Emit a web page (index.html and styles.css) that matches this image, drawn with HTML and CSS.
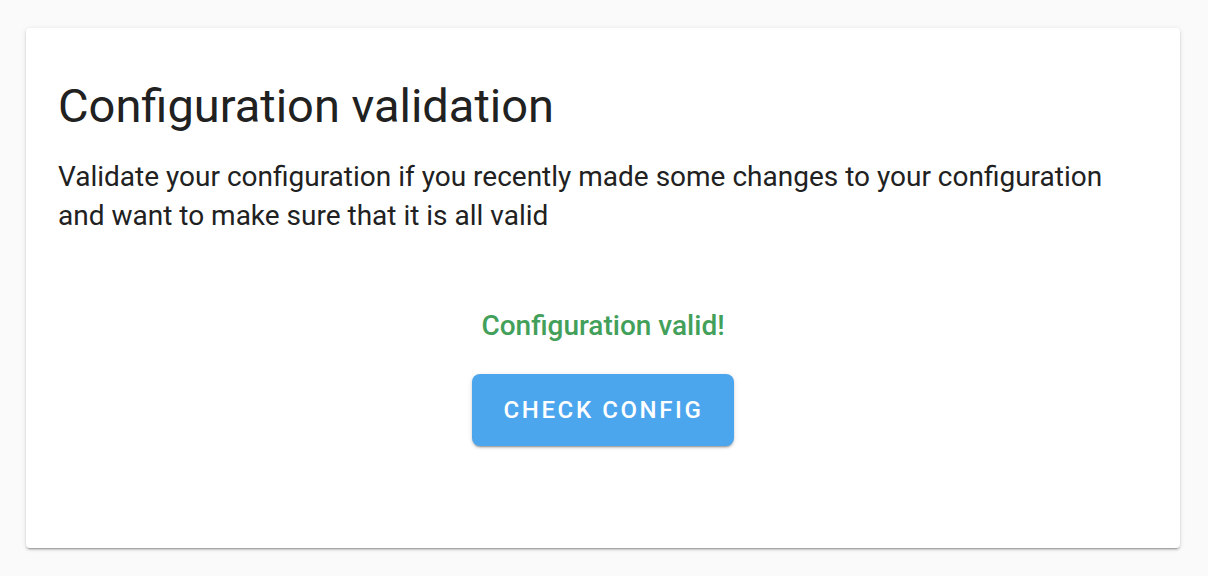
FILE: index.html
```html
<!DOCTYPE html>
<html>
<head>
<meta charset="utf-8">
<link rel="stylesheet" href="styles.css">
</head>
<body>
<div class="page">
  <div class="card">
    <h1 class="card-title">Configuration validation</h1>
    <p class="card-desc">Validate your configuration if you recently made some changes to your configuration and want to make sure that it is all valid</p>
    <div class="card-result">
      <div class="result-text">Configuration valid!</div>
      <button class="btn">Check config</button>
    </div>
  </div>
</div>
</body>
</html>
```
FILE: styles.css
```css
html, body {
  margin: 0;
  padding: 0;
  background: #fafafa;
  font-family: Roboto, "Noto Sans", sans-serif;
}
.page {
  padding: 28px 28px 28px 26px;
}
.card {
  width: 1154px;
  height: 520px;
  box-sizing: border-box;
  background: #fff;
  border-radius: 4px;
  box-shadow: 0 2px 2px 0 rgba(0,0,0,0.14), 0 1px 5px 0 rgba(0,0,0,0.12), 0 3px 1px -2px rgba(0,0,0,0.2);
  padding: 50px 32px 0 32px;
  color: #212121;
}
.card-title {
  margin: 0;
  font-weight: 400;
  font-size: 47px;
  line-height: 56px;
}
.card-desc {
  margin: 23px 0 0 0;
  font-size: 28px;
  line-height: 39px;
  max-width: 1070px;
}
.card-result {
  display: flex;
  flex-direction: column;
  align-items: center;
  margin-top: 75px;
}
.result-text {
  color: #43a05a;
  font-size: 28px;
  font-weight: 500;
  line-height: 32px;
}
.btn {
  margin-top: 32px;
  height: 72px;
  padding: 0 31px 0 32px;
  border: none;
  border-radius: 8px;
  background: #4ca6ee;
  color: #fff;
  font-family: Roboto, sans-serif;
  font-size: 24px;
  font-weight: 500;
  letter-spacing: 2.6px;
  text-transform: uppercase;
  box-shadow: 0 3px 1px -2px rgba(0,0,0,0.2), 0 2px 2px 0 rgba(0,0,0,0.14), 0 1px 5px 0 rgba(0,0,0,0.12);
}
```
